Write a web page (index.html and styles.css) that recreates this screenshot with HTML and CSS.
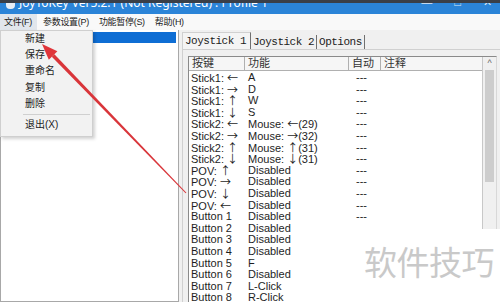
FILE: index.html
```html
<!DOCTYPE html>
<html lang="zh">
  <head>
    <meta charset="UTF-8" />
    <title>JoyToKey</title>
    <link rel="stylesheet" href="styles.css">
  </head>
  <body>
    <div class="titlebar">
      <span class="appicon"></span>
      <span class="titletext">JoyToKey Ver5.2.1 (Not Registered) : Profile 1</span>
      <span class="winbtns"><span>—</span><span>□</span><span>✕</span></span>
    </div>
    <div class="menubar">
      <span class="menuitem active">文件(F)</span>
      <span class="menuitem">参数设置(P)</span>
      <span class="menuitem">功能暂停(S)</span>
      <span class="menuitem">帮助(H)</span>
    </div>

    <div class="main">
      <!-- 左边 profile 列表 -->
      <div class="profiles">
        <div class="profile selected"></div>
      </div>

      <div class="pane">
        <div class="tabs">
          <span class="tab current">Joystick 1</span>
          <span class="tab">Joystick 2</span>
          <span class="tab">Options</span>
        </div>
        <div class="tabbody">
          <div class="listview">
            <div class="rows">
              <div class="row head">
                <span>按键</span><span>功能</span><span>自动</span><span>注释</span>
              </div>
              <div class="row"><span>Stick1: <i class="arw">←</i></span><span>A</span><span>---</span><span></span></div>
              <div class="row"><span>Stick1: <i class="arw">→</i></span><span>D</span><span>---</span><span></span></div>
              <div class="row"><span>Stick1: <i class="arw">↑</i></span><span>W</span><span>---</span><span></span></div>
              <div class="row"><span>Stick1: <i class="arw">↓</i></span><span>S</span><span>---</span><span></span></div>
              <div class="row"><span>Stick2: <i class="arw">←</i></span><span>Mouse: <i class="arw">←</i>(29)</span><span>---</span><span></span></div>
              <div class="row"><span>Stick2: <i class="arw">→</i></span><span>Mouse: <i class="arw">→</i>(32)</span><span>---</span><span></span></div>
              <div class="row"><span>Stick2: <i class="arw">↑</i></span><span>Mouse: <i class="arw">↑</i>(31)</span><span>---</span><span></span></div>
              <div class="row"><span>Stick2: <i class="arw">↓</i></span><span>Mouse: <i class="arw">↓</i>(31)</span><span>---</span><span></span></div>
              <div class="row"><span>POV: <i class="arw">↑</i></span><span>Disabled</span><span>---</span><span></span></div>
              <div class="row"><span>POV: <i class="arw">→</i></span><span>Disabled</span><span>---</span><span></span></div>
              <div class="row"><span>POV: <i class="arw">↓</i></span><span>Disabled</span><span>---</span><span></span></div>
              <div class="row"><span>POV: <i class="arw">←</i></span><span>Disabled</span><span>---</span><span></span></div>
              <div class="row"><span>Button 1</span><span>Disabled</span><span>---</span><span></span></div>
              <div class="row"><span>Button 2</span><span>Disabled</span><span>---</span><span></span></div>
              <div class="row"><span>Button 3</span><span>Disabled</span><span>---</span><span></span></div>
              <div class="row"><span>Button 4</span><span>Disabled</span><span>---</span><span></span></div>
              <div class="row"><span>Button 5</span><span>F</span><span>---</span><span></span></div>
              <div class="row"><span>Button 6</span><span>Disabled</span><span>---</span><span></span></div>
              <div class="row"><span>Button 7</span><span>L-Click</span><span>---</span><span></span></div>
              <div class="row"><span>Button 8</span><span>R-Click</span><span>---</span><span></span></div>
            </div>
            <div class="scrollbar">
              <div class="uparrow">^</div>
              <div class="thumb"></div>
            </div>
          </div>
        </div>
      </div>
    </div>

    <!-- 文件 下拉菜单 -->
    <div class="dropdown">
      <div class="ditem">新建</div>
      <div class="ditem">保存</div>
      <div class="ditem">重命名</div>
      <div class="ditem">复制</div>
      <div class="ditem">删除</div>
      <div class="dsep"></div>
      <div class="ditem">退出(X)</div>
    </div>

    <!-- 红色箭头 -->
    <svg class="arrow" width="500" height="302" viewBox="0 0 500 302">
      <polygon points="54.4,54.3 51.8,56.7 185.6,193.3 186.4,192.7" fill="#d9353a" />
      <polygon points="42,44 57.4,51.3 48.8,59.7" fill="#e0353a" />
    </svg>

    <div class="watermark">软件技巧</div>
  </body>
</html>
```

FILE: styles.css
```css
* {
  box-sizing: border-box;
}

body {
  margin: 0;
  width: 500px;
  height: 302px;
  overflow: hidden;
  background-color: #f0f0f0;
  font-family: "Liberation Sans", "Noto Sans CJK SC", sans-serif;
  position: relative;
}

/* 标题栏 */
.titlebar {
  height: 14px;
  background-color: #2b84d8;
  border-top: 3px solid #3a3f48;
  display: flex;
  align-items: flex-start;
  overflow: hidden;
  color: white;
}
.appicon {
  width: 9px;
  height: 6px;
  margin: 0 4px 0 6px;
  background-color: #e8eef6;
  border-radius: 0 0 4px 4px;
}
.titletext {
  font-family: "Noto Sans", sans-serif;
  font-size: 12px;
  line-height: 12px;
  margin-top: -6px;
}
.winbtns {
  margin-left: auto;
  display: flex;
  gap: 22px;
  font-size: 11px;
  line-height: 10px;
  margin-top: -6px;
  margin-right: 8px;
  color: #dbe8f6;
}

/* 菜单栏 */
.menubar {
  height: 16px;
  background-color: #f9f9f9;
  display: flex;
  align-items: center;
  font-size: 9px;
  letter-spacing: -0.3px;
  color: #222;
}
.menuitem {
  padding: 0 4px 0 4px;
  line-height: 16px;
  margin-right: 2px;
}
.menuitem.active {
  background-color: #e1e6ec;
  padding: 0 5px 0 4px;
}

.main {
  display: flex;
  height: 272px;
}

/* 左边列表 */
.profiles {
  width: 179px;
  background-color: white;
  border: 1px solid #a8a8a8;
  border-top: none;
  padding: 2px 2px 0 2px;
}
.profile {
  height: 11px;
}
.profile.selected {
  background-color: #0f6ed4;
}

.pane {
  flex: 1;
  padding: 2px 0 0 3px;
  display: flex;
  flex-direction: column;
}

/* 标签页 */
.tabs {
  display: flex;
  height: 17px;
  align-items: flex-end;
  font-family: "Liberation Mono", monospace;
  font-size: 11px;
  letter-spacing: -0.5px;
  color: #1c1c1c;
}
.tab {
  padding: 0 2px 0 2px;
  line-height: 14px;
  border-right: 1px solid #707070;
}
.tab.current {
  line-height: 16px;
  padding: 0 4px 0 2px;
  border: 1px solid #d0d0d0;
  border-bottom: none;
  border-right: 1px solid #707070;
  background-color: #f4f4f4;
}

.tabbody {
  flex: 1;
  border-left: 1px solid #d0d0d0;
  border-top: 1px solid #d0d0d0;
  padding: 6px 3px 0 5px;
}

.listview {
  height: 100%;
  background-color: white;
  border: 1px solid #8a8a8a;
  border-right-color: #d8d8d8;
  display: flex;
}
.rows {
  flex: 1;
}
.row {
  display: grid;
  grid-template-columns: 56px 104px 32px 1fr;
  font-size: 11px;
  line-height: 11.6px;
  height: 11.6px;
  color: #1e1e1e;
  white-space: nowrap;
}
.row span {
  padding-left: 2px;
}
.row span:nth-child(2) {
  padding-left: 3px;
}
.row span:nth-child(3) {
  padding-left: 7px;
}
.arw {
  font-style: normal;
  font-family: "Noto Sans CJK SC", sans-serif;
  font-size: 11px;
  line-height: 1;
}
.row.head {
  line-height: 13px;
  height: 14px;
  margin-bottom: 1px;
  background-color: #f6f6f6;
  border-bottom: 1px solid #b0b0b0;
  font-size: 11px;
  color: #333;
}
.row.head span {
  border-right: 1px solid #b0b0b0;
  padding-left: 3px;
}
.row.head span:last-child {
  border-right: none;
}

.scrollbar {
  width: 14px;
  background-color: #f0f0f0;
  border-left: 1px solid #c8c8c8;
  padding: 0 2px;
}
.uparrow {
  height: 13px;
  font-size: 9px;
  line-height: 12px;
  text-align: center;
  color: #666;
}
.thumb {
  height: 112px;
  background-color: #cdcdcd;
}

/* 下拉菜单 */
.dropdown {
  position: absolute;
  left: 0;
  top: 30px;
  width: 93px;
  background-color: #f2f2f2;
  border: 1px solid #cfcfcf;
  box-shadow: 2px 2px 3px rgba(0, 0, 0, 0.18);
  padding: 0 0 3px 0;
  font-size: 10px;
  color: #222;
}
.ditem {
  padding-left: 24px;
  line-height: 16.2px;
}
.dsep {
  height: 1px;
  margin: 2px 2px 2px 22px;
  background-color: #d0d0d0;
}

.arrow {
  position: absolute;
  left: 0;
  top: 0;
}

/* 水印 */
.watermark {
  position: absolute;
  left: 350px;
  top: 229px;
  width: 150px;
  height: 73px;
  background-color: white;
  padding: 12px 0 0 14px;
  font-family: "Noto Sans CJK SC", sans-serif;
  font-size: 33px;
  line-height: 40px;
  color: #c9c9c9;
  letter-spacing: -0.5px;
}
```
